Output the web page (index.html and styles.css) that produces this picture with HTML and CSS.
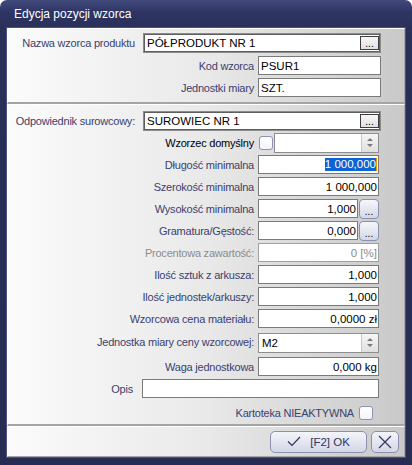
FILE: index.html
```html
<!DOCTYPE html>
<html lang="pl">
<head>
<meta charset="utf-8">
<title>Edycja pozycji wzorca</title>
<link rel="stylesheet" href="styles.css">
</head>
<body>
<div class="window">
  <div class="titlebar">Edycja pozycji wzorca</div>
  <div class="client">
    <div class="panel p1">
      <div class="row rh20">
        <span class="lbl lw">Nazwa wzorca produktu</span>
        <div class="fld strong wide">PÓŁPRODUKT NR 1<span class="dots-in">...</span></div>
      </div>
      <div class="row">
        <span class="lbl ls">Kod wzorca</span>
        <div class="fld kod">PSUR1</div>
      </div>
      <div class="row">
        <span class="lbl ls">Jednostki miary</span>
        <div class="fld kod">SZT.</div>
      </div>
    </div>

    <div class="panel p2">
      <div class="row">
        <span class="lbl lw">Odpowiednik surowcowy:</span>
        <div class="fld strong wide">SUROWIEC NR 1<span class="dots-in">...</span></div>
      </div>
      <div class="row">
        <span class="lbl ls lcb black">Wzorzec domyślny</span>
        <span class="chk"></span>
        <div class="combo c-def"><span class="ctxt"></span><span class="spin"><svg width="8" height="11" viewBox="0 0 8 11"><path d="M4 1 L7 4 L1 4 Z M1 7 L7 7 L4 10 Z" fill="#7a7a7a"/></svg></span></div>
      </div>
      <div class="row">
        <span class="lbl ls">Długość minimalna</span>
        <div class="fld num n121"><span class="sel">1 000,000</span></div>
      </div>
      <div class="row">
        <span class="lbl ls">Szerokość minimalna</span>
        <div class="fld num n121">1 000,000</div>
      </div>
      <div class="row">
        <span class="lbl ls">Wysokość minimalna</span>
        <div class="fld num n100">1,000</div>
        <span class="dbtn">...</span>
      </div>
      <div class="row">
        <span class="lbl ls">Gramatura/Gęstość:</span>
        <div class="fld num n100">0,000</div>
        <span class="dbtn">...</span>
      </div>
      <div class="row">
        <span class="lbl ls dis">Procentowa zawartość:</span>
        <div class="fld num n121 disf">0 [%]</div>
      </div>
      <div class="row">
        <span class="lbl ls">Ilość sztuk z arkusza:</span>
        <div class="fld num n121">1,000</div>
      </div>
      <div class="row">
        <span class="lbl ls">Ilość jednostek/arkuszy:</span>
        <div class="fld num n121">1,000</div>
      </div>
      <div class="row">
        <span class="lbl ls">Wzorcowa cena materiału:</span>
        <div class="fld num n121">0,0000 zł</div>
      </div>
      <div class="row rh21">
        <span class="lbl ls">Jednostka miary ceny wzorcowej:</span>
        <div class="combo c-unit"><span class="ctxt">M2</span><span class="spin"><svg width="8" height="11" viewBox="0 0 8 11"><path d="M4 1 L7 4 L1 4 Z M1 7 L7 7 L4 10 Z" fill="#7a7a7a"/></svg></span></div>
      </div>
      <div class="row mt2">
        <span class="lbl ls">Waga jednostkowa</span>
        <div class="fld num n121">0,000 kg</div>
      </div>
      <div class="row">
        <span class="lbl lo">Opis</span>
        <div class="fld opis"></div>
      </div>
      <div class="row mt2">
        <span class="lbl lk">Kartoteka NIEAKTYWNA</span>
        <span class="chk"></span>
      </div>
    </div>

    <div class="panel p3">
      <button class="btn ok" type="button"><svg width="14" height="11" viewBox="0 0 14 11"><path d="M1 5.5 L5 9.5 L13 1" fill="none" stroke="#30365a" stroke-width="1.2"/></svg><span>[F2] OK</span></button>
      <button class="btn cancel" type="button"><svg width="14" height="14" viewBox="0 0 14 14"><path d="M1 1 L13 13 M13 1 L1 13" fill="none" stroke="#30365a" stroke-width="1.2"/></svg></button>
    </div>
  </div>
</div>
</body>
</html>
```
FILE: styles.css
```css
html, body {
  margin: 0;
  padding: 0;
  background: #ffffff;
}

body {
  font-family: "Liberation Sans", Arial, sans-serif;
  font-size: 11px;
  color: #000;
}

.window {
  width: 412px;
  height: 465px;
  box-sizing: border-box;
  border-radius: 7px 7px 0 0;
  background: linear-gradient(to bottom, #424a7c 0px, #2e3564 12px, #293058 28px, #262c52 100%);
  display: flex;
  flex-direction: column;
  padding: 0 7px 8px 7px;
}

.titlebar {
  height: 28px;
  flex: none;
  display: flex;
  align-items: center;
  padding-left: 7px;
  color: #ffffff;
  font-size: 12px;
}

.client {
  flex: 1;
  display: flex;
  flex-direction: column;
  box-shadow: 0 0 0 1px #4a5183;
}

.panel {
  box-sizing: border-box;
  background: linear-gradient(to right, #fbfbfb 0%, #e9e9e9 50%, #c9c9c9 100%);
  border-top: 1px solid #ffffff;
  border-left: 1px solid #ffffff;
  border-right: 1px solid #a8a8a8;
  border-bottom: 2px solid #a4a4a4;
  display: flex;
  flex-direction: column;
}

.p1 {
  height: 76px;
  padding-top: 4px;
  gap: 3px;
}

.p2 {
  height: 322px;
  padding-top: 6px;
  gap: 3px;
}

.p3 {
  height: 31px;
  flex-direction: row;
  align-items: center;
  justify-content: flex-end;
  padding-right: 5px;
  gap: 4px;
  border-bottom-width: 1px;
}

.row {
  display: flex;
  align-items: center;
  height: 19px;
  flex: none;
}

.rh20 { height: 20px; }
.rh21 { height: 21px; }
.mt2 { margin-top: 2px; }

.lbl {
  box-sizing: border-box;
  text-align: right;
  color: #3b416e;
  white-space: nowrap;
  flex: none;
  letter-spacing: -0.22px;
}

.black { color: #000000; }
.dis { color: #8c8c8c; }

.lw { width: 135px; padding-right: 8px; }
.ls { width: 250px; padding-right: 4px; }
.lcb { width: 251px; padding-right: 5px; }
.lo { width: 134px; padding-right: 9px; }
.lk { width: 351px; padding-right: 5px; }

.fld {
  box-sizing: border-box;
  height: 19px;
  border: 1px solid #7a7a7a;
  background: #ffffff;
  display: flex;
  align-items: center;
  padding: 0 2px;
  white-space: nowrap;
  overflow: hidden;
  flex: none;
  font-size: 11.5px;
}

.strong {
  height: 20px;
  border-color: #8c8c8c;
  box-shadow: inset 0 0 0 1px #5e5e5e;
  padding: 0 1px 0 3px;
}

.wide { width: 238px; }
.kod { width: 123px; }
.n121 { width: 121px; }
.n100 { width: 100px; }
.opis { width: 237px; }

.num {
  justify-content: flex-end;
  padding-right: 1px;
}

.disf {
  color: #8c8c8c;
  border-color: #a0a0a0;
}

.sel {
  background: #0d63d2;
  color: #ffffff;
  border-right: 1px solid #f29100;
  line-height: 13px;
}

.dots-in {
  margin-left: auto;
  box-sizing: border-box;
  width: 19px;
  height: 14px;
  border: 1px solid #3e3e3e;
  background: linear-gradient(#f6f6f6, #e2e2e2);
  display: flex;
  align-items: flex-end;
  justify-content: center;
  line-height: 10px;
  font-size: 10px;
  color: #000;
}

.dbtn {
  box-sizing: border-box;
  width: 20px;
  height: 20px;
  margin-left: 1px;
  border: 1px solid #8a90b0;
  border-radius: 4px;
  background: linear-gradient(#f6f7fc, #d4d7e6);
  display: flex;
  align-items: flex-end;
  justify-content: center;
  font-size: 10px;
  line-height: 12px;
  color: #000;
  flex: none;
}

.chk {
  box-sizing: border-box;
  width: 14px;
  height: 14px;
  border: 1px solid #8d93b9;
  border-radius: 3px;
  background: linear-gradient(#ffffff, #f4f5fa);
  flex: none;
}

.combo {
  box-sizing: border-box;
  height: 20px;
  border: 1px solid #8e8e8e;
  background: #ffffff;
  display: flex;
  align-items: stretch;
  flex: none;
}

.c-def {
  width: 105px;
  margin-left: 1px;
}

.c-unit {
  width: 121px;
  margin-top: 2px;
}

.ctxt {
  flex: 1;
  display: flex;
  align-items: center;
  padding-left: 3px;
  font-size: 11.5px;
}

.spin {
  width: 16px;
  border-left: 1px solid #c9c9c9;
  background: linear-gradient(#f6f6f6, #e0e0e0);
  display: flex;
  align-items: center;
  justify-content: center;
}

.btn {
  box-sizing: border-box;
  height: 22px;
  border: 1px solid #8b90ae;
  border-radius: 5px;
  background: linear-gradient(#f4f5fb, #d3d6e6);
  display: flex;
  align-items: center;
  justify-content: center;
  padding: 0;
  font-family: "Liberation Sans", Arial, sans-serif;
  font-size: 11.5px;
  color: #30365a;
}

.ok {
  width: 97px;
  gap: 9px;
}

.cancel {
  width: 28px;
}
```
